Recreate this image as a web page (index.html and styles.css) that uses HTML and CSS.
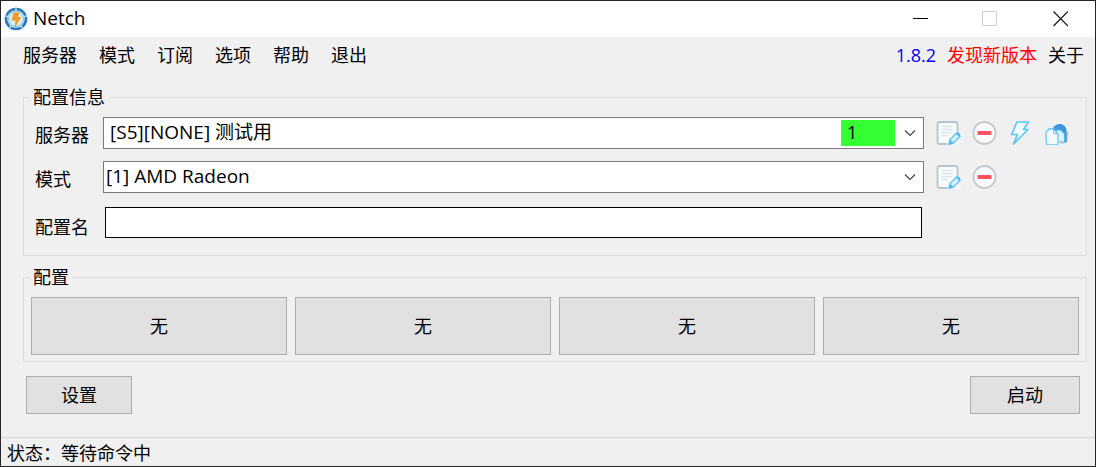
FILE: index.html
```html
<!DOCTYPE html>
<html lang="zh-CN">
<head>
    <meta charset="UTF-8">
    <meta name="viewport" content="width=device-width, initial-scale=1.0">
    <title>Netch</title>
    <link rel="stylesheet" href="styles.css">
</head>
<body>
    <svg class="symbols" aria-hidden="true">
        <symbol id="icon-edit" viewBox="0 0 24 24">
            <rect x="1" y="1" width="20" height="22" rx="2" fill="#f8fbfc" stroke="#b4c5cf" stroke-width="1.8"/>
            <path d="M5 5.500h11M5 8.500h11M5 11.500h11M5 14.500h6" stroke="#dde5e9" stroke-width="1.500"/>
            <path d="M11 24v-5L20 10l4 4V24z" fill="#f0f8fb"/>
            <path d="M12.500 23.500l1-5 6.500-6.500 3.500 3.500L17 22z" fill="#d5f1ff" stroke="#62c3f5" stroke-width="1.400"/>
            <path d="M19.500 12.500l2-1.500 2.500 2.500-1 2.500zM12.500 23.500l1-5 3.500 3.500z" fill="#55b9f2"/>
        </symbol>
        <symbol id="icon-remove" viewBox="0 0 24 24">
            <circle cx="12" cy="12" r="11" fill="#fafafa" stroke="#c5cbd0" stroke-width="1.800"/>
            <rect x="5" y="10" width="14" height="4" rx="1" fill="#fb5350"/>
            <path d="M6 10.500h12M6 13.500h12" stroke="#f64ca0" stroke-dasharray="1 1"/>
        </symbol>
        <symbol id="icon-speed" viewBox="0 0 24 24">
            <path d="M8.500 1H20l-5 7.500h4.500L5 23l4-9.500H3z" fill="#f1fbff" stroke="#5fc7f2" stroke-width="1.700" stroke-linejoin="round"/>
        </symbol>
        <symbol id="icon-copy" viewBox="0 0 24 24">
            <path d="M16 23l7-1 1-12-2 1z" fill="#c3c8cc"/>
            <path d="M8 8C9 5 12 3 16 3c4 .5 6 4 6 7V21h-5z" fill="#3b96df"/>
            <path d="M12 9h4l4 4v8h-8z" fill="#d9f2fe" stroke="#59b9ef"/>
            <path d="M1.500 10.500l2-1L4 8h5l4.500 5v11H2V19h-.5z" fill="#f3fbff" stroke="#66c6f4" stroke-width="1.300"/>
            <path d="M9 8v4.500l4.500.5" fill="none" stroke="#66c6f4"/>
        </symbol>
        <symbol id="icon-chevron" viewBox="0 0 12 12">
            <path d="M1 3.500l5 5 5-5" fill="none" stroke="#444" stroke-width="1.200"/>
        </symbol>
    </svg>

    <div class="window">
        <header class="titlebar">
            <svg class="logo" viewBox="0 0 24 24" aria-hidden="true">
                <circle cx="12" cy="12" r="10" fill="#dff3f7" stroke="#2879bd" stroke-width="2.600"/>
                <circle cx="12" cy="12" r="7.500" fill="#d6eff5" stroke="#83bdd9"/>
                <path d="M12 0v4M.5 8.500l4 1.500M23.500 8.500l-4 1.500M5 21.500l2.500-3M19 21.500l-2.500-3" stroke="#a8d9e9" stroke-width="1.500"/>
                <path d="M9.500 5.500h6L14 10h3.500l-7 11 1-7.500H7.500z" fill="#f09a2c"/>
            </svg>
            <h1 class="title">Netch</h1>
            <div class="window-buttons">
                <button type="button" aria-label="最小化">
                    <svg viewBox="0 0 16 16"><path d="M1 7.500h15" stroke="#000"/></svg>
                </button>
                <button type="button" aria-label="最大化" disabled>
                    <svg viewBox="0 0 16 16"><path d="M.5.500h14v14H.5z" fill="none" stroke="#c8d0d3"/></svg>
                </button>
                <button type="button" aria-label="关闭">
                    <svg viewBox="0 0 16 16"><path d="M1.500.500L16 15M16 .500L1.500 15" stroke="#111" stroke-width="1.200"/></svg>
                </button>
            </div>
        </header>

        <nav class="menubar">
            <button type="button">服务器</button>
            <button type="button">模式</button>
            <button type="button">订阅</button>
            <button type="button">选项</button>
            <button type="button">帮助</button>
            <button type="button">退出</button>
            <div class="menu-right">
                <a class="version" href="#version">1.8.2</a>
                <a class="update" href="#update">发现新版本</a>
                <button type="button">关于</button>
            </div>
        </nav>

        <main class="content">
            <fieldset class="group">
                <legend>配置信息</legend>
                <div class="info">
                    <div class="row">
                        <label for="server">服务器</label>
                        <div class="combo">
                            <select id="server" class="server-select">
                                <option>[S5][NONE] 测试用</option>
                            </select>
                            <span class="delay">1</span>
                            <svg class="chevron"><use href="#icon-chevron"/></svg>
                        </div>
                        <div class="actions">
                            <button type="button" aria-label="编辑服务器"><svg><use href="#icon-edit"/></svg></button>
                            <button type="button" aria-label="删除服务器"><svg><use href="#icon-remove"/></svg></button>
                            <button type="button" aria-label="测速"><svg><use href="#icon-speed"/></svg></button>
                            <button type="button" aria-label="复制链接"><svg><use href="#icon-copy"/></svg></button>
                        </div>
                    </div>
                    <div class="row">
                        <label for="mode">模式</label>
                        <div class="combo">
                            <select id="mode">
                                <option>[1] AMD Radeon</option>
                            </select>
                            <svg class="chevron"><use href="#icon-chevron"/></svg>
                        </div>
                        <div class="actions">
                            <button type="button" aria-label="编辑模式"><svg><use href="#icon-edit"/></svg></button>
                            <button type="button" aria-label="删除模式"><svg><use href="#icon-remove"/></svg></button>
                        </div>
                    </div>
                    <div class="row row-name">
                        <label for="profileName">配置名</label>
                        <input type="text" id="profileName">
                    </div>
                </div>
            </fieldset>

            <fieldset class="group">
                <legend>配置</legend>
                <div class="profiles">
                    <button type="button" class="btn">无</button>
                    <button type="button" class="btn">无</button>
                    <button type="button" class="btn">无</button>
                    <button type="button" class="btn">无</button>
                </div>
            </fieldset>

            <div class="controls">
                <button type="button" class="btn btn-settings">设置</button>
                <button type="button" class="btn btn-start">启动</button>
            </div>
        </main>

        <footer class="statusbar">状态：等待命令中</footer>
    </div>
</body>
</html>
```
FILE: styles.css
```css
* {
    box-sizing: border-box;
}
body {
    margin: 0;
    font-family: "Open Sans", "Noto Sans CJK SC", sans-serif;
    font-size: 18px;
    line-height: 24px;
    color: #000;
}
button, select, input {
    font: inherit;
    color: inherit;
    border-radius: 0;
}
button {
    padding: 0;
    border: none;
    background: none;
}
.symbols {
    position: absolute;
    width: 0;
    height: 0;
}
.window {
    display: flex;
    flex-direction: column;
    min-height: 100vh;
    border: 1px solid #262626;
    background: #f0f0f0;
}

/* Title bar */
.titlebar {
    display: flex;
    align-items: center;
    height: 36px;
    padding-left: 3px;
    background: #fff;
}
.logo {
    width: 24px;
    height: 24px;
}
.title {
    margin: 0 0 0 5px;
    padding-bottom: 2px;
    font-size: 19px;
    font-weight: normal;
}
.window-buttons {
    display: flex;
    margin-left: auto;
}
.window-buttons button {
    display: flex;
    align-items: center;
    justify-content: center;
    width: 70px;
    height: 36px;
}
.window-buttons svg {
    width: 16px;
    height: 16px;
}

/* Menu */
.menubar {
    display: flex;
    align-items: center;
    gap: 22px;
    height: 36px;
    padding: 0 11px 0 22px;
}
.menu-right {
    display: flex;
    gap: 11px;
    margin-left: auto;
}
.menu-right a {
    text-decoration: none;
}
.version {
    color: #00f;
}
.update {
    color: #f00;
}

/* Groups */
.content {
    padding: 12px 8px 0 22px;
}
.group {
    min-width: 0;
    margin: 0 0 9px;
    padding: 0;
    border: 1px solid #dcdcdc;
}
.group legend {
    margin-left: 6px;
    padding: 0 3px;
}
.info {
    padding: 8px 18px 17px 11px;
}
.row {
    display: flex;
    align-items: center;
    gap: 12px;
    height: 32px;
    margin-bottom: 12px;
}
.row label {
    flex: none;
    width: 56px;
    padding-top: 4px;
}
.combo {
    position: relative;
    flex: 1;
}
.combo select {
    display: block;
    width: 100%;
    height: 32px;
    padding: 0 30px 2px 2px;
    border: 1px solid #7a7a7a;
    background: #fff;
    font-size: 19px;
    appearance: none;
}
.combo .server-select {
    padding-left: 6px;
}
.delay {
    position: absolute;
    top: 3px;
    right: 29px;
    width: 54px;
    height: 26px;
    padding-left: 6px;
    background: #33ff33;
    pointer-events: none;
}
.chevron {
    position: absolute;
    top: 10px;
    right: 8px;
    width: 12px;
    height: 12px;
    pointer-events: none;
}
.actions {
    display: flex;
    gap: 11px;
    width: 132px;
}
.actions button, .actions svg {
    display: block;
    width: 25px;
    height: 24px;
}
.row-name {
    height: 31px;
    margin: 14px 146px 0 0;
}
.row-name label {
    width: 58px;
    padding-top: 8px;
}
.row-name input {
    flex: 1;
    min-width: 0;
    height: 31px;
    padding: 0 4px;
    border: 1px solid #000;
    background: #fff;
}

/* Buttons */
.btn {
    border: 1px solid #adadad;
    background: #e1e1e1;
}
.btn:hover {
    border-color: #0078d7;
    background: #e5f1fb;
}
.profiles {
    display: grid;
    grid-template-columns: repeat(4, 1fr);
    gap: 8px;
    padding: 8px 7px 6px;
}
.profiles .btn {
    height: 58px;
}
.controls {
    display: flex;
    justify-content: space-between;
    padding: 5px 7px 0 3px;
}
.controls .btn {
    height: 38px;
}
.btn-settings {
    width: 106px;
}
.btn-start {
    width: 110px;
}

.statusbar {
    margin-top: auto;
    padding: 3px 6px 1px;
    border-top: 1px solid #d7d7d7;
}
```
